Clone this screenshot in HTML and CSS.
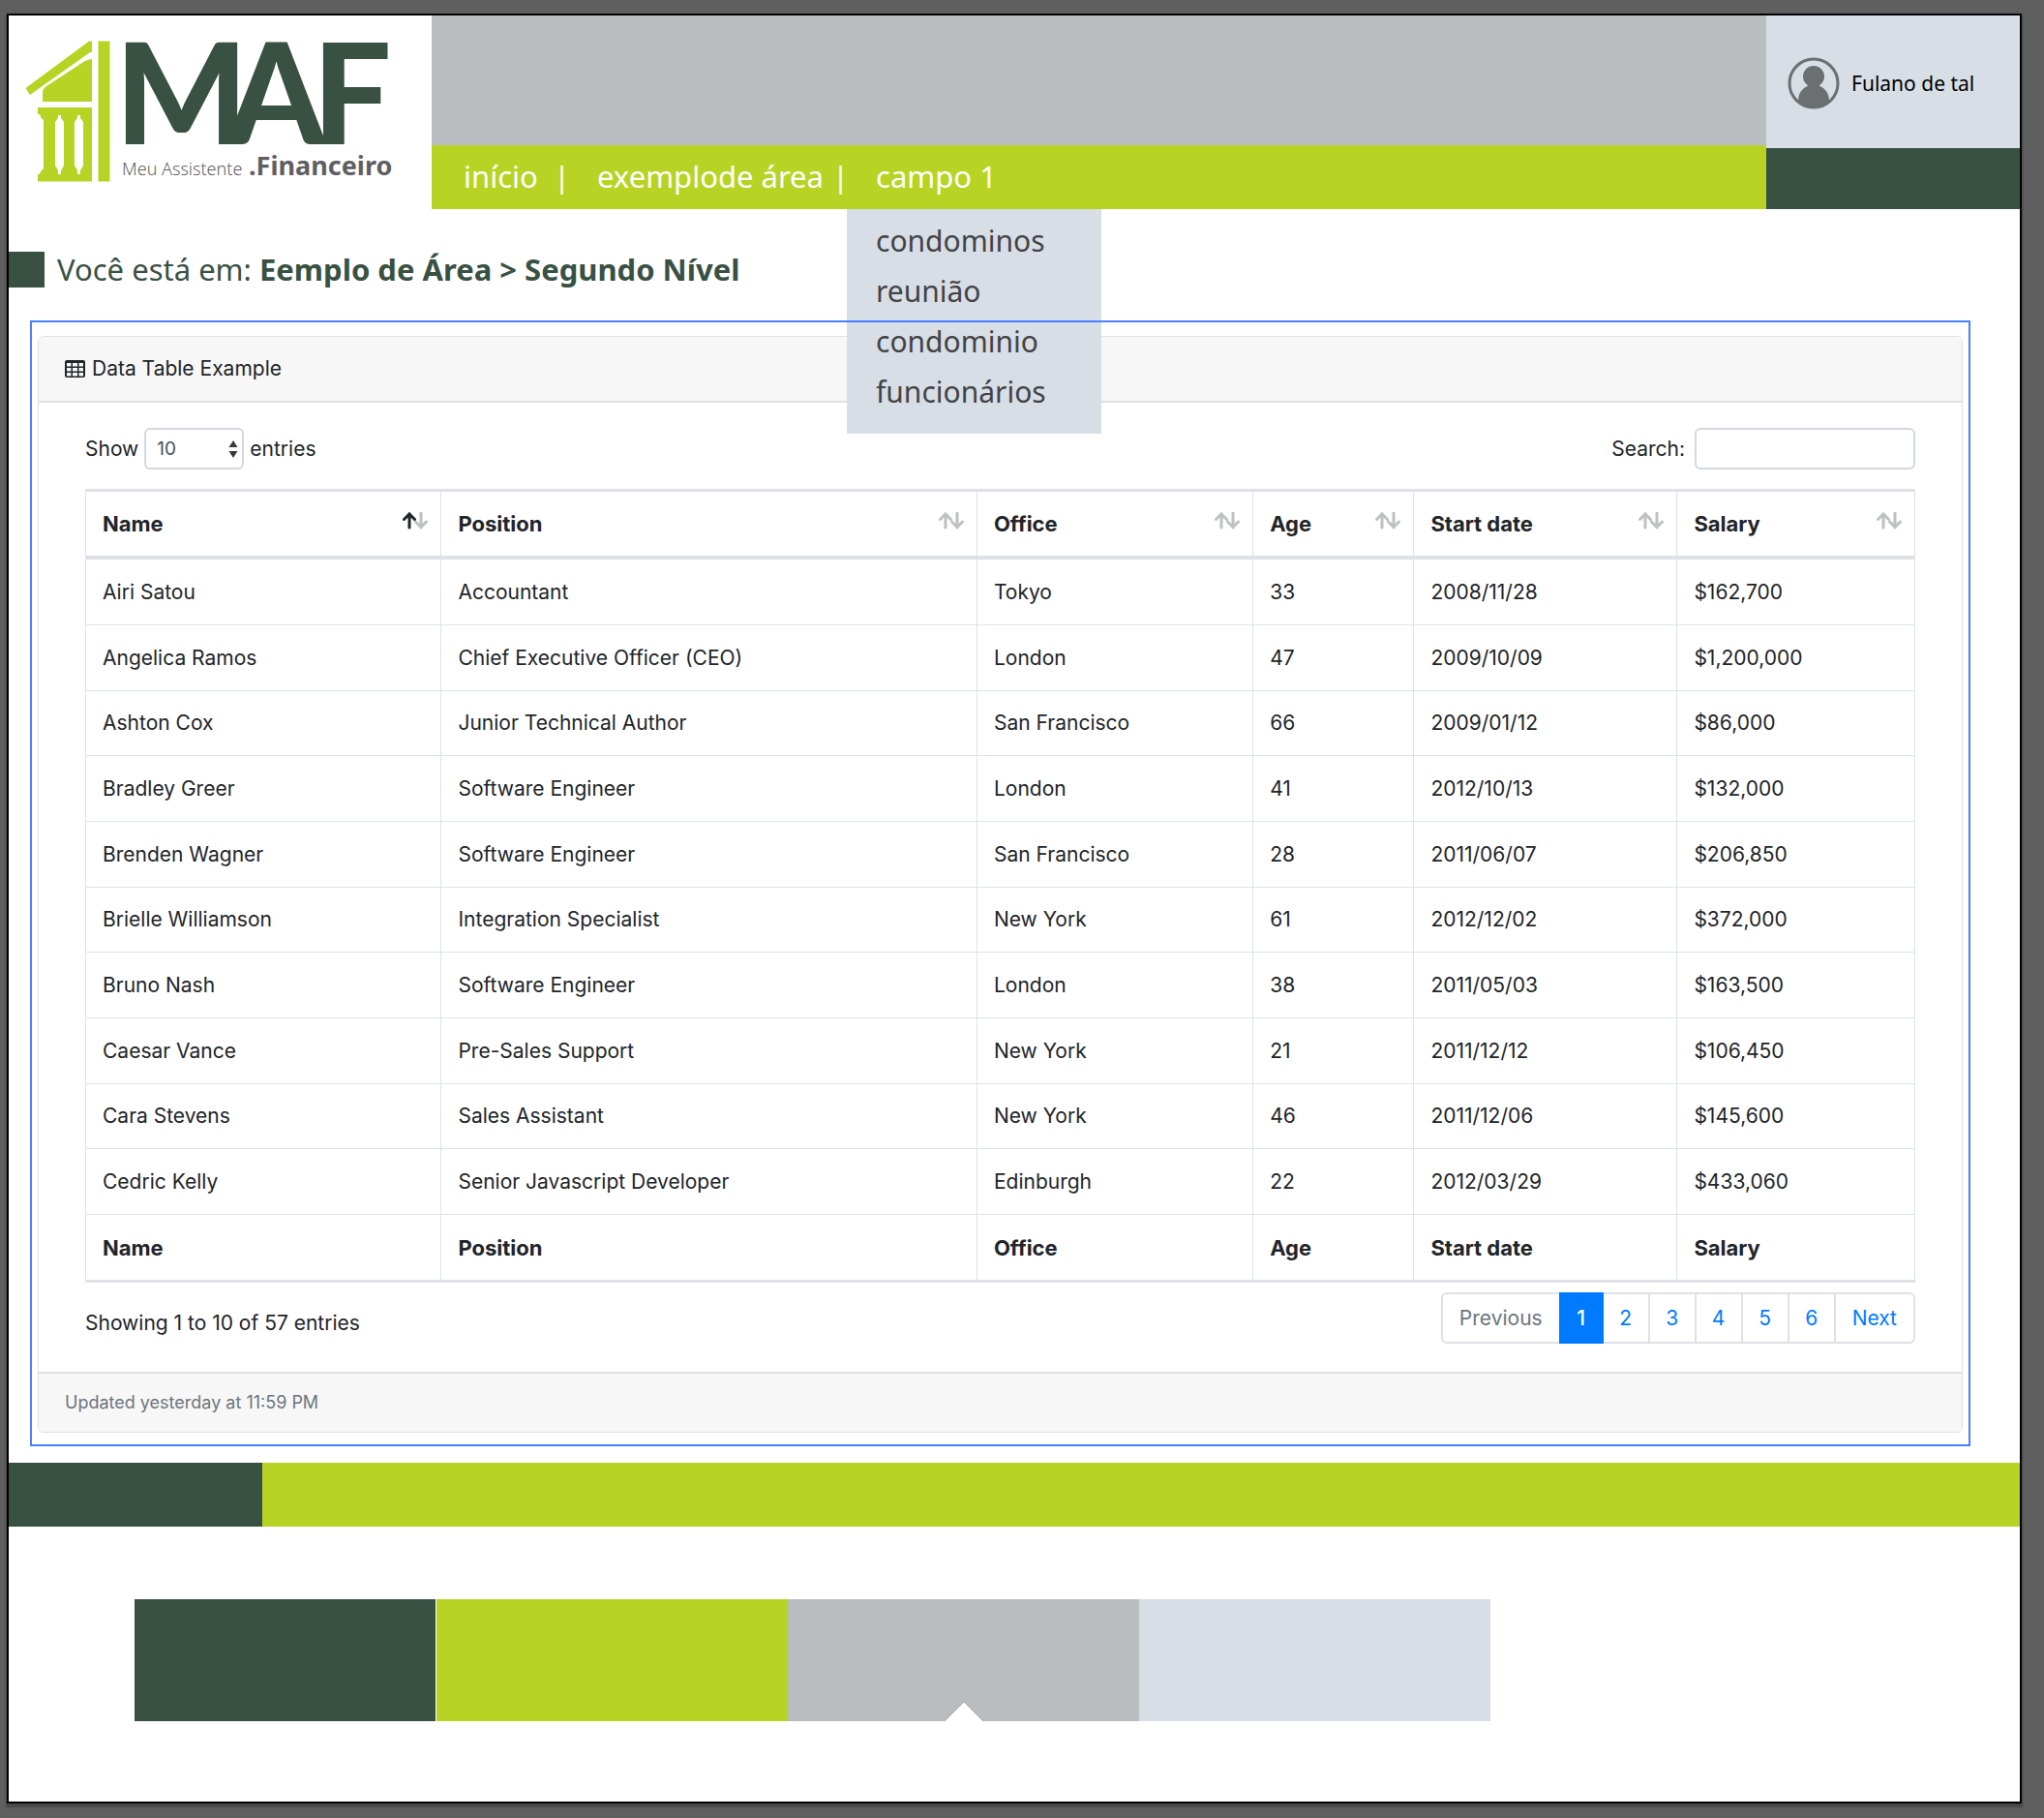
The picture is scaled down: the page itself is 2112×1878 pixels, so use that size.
FILE: index.html
```html
<!DOCTYPE html>
<html lang="pt-BR">
<head>
<meta charset="utf-8">
<meta name="viewport" content="width=device-width, initial-scale=1">
<title>MAF - Meu Assistente Financeiro</title>
<link rel="stylesheet" href="styles.css">
</head>
<body>
<svg class="defs" aria-hidden="true">
  <symbol id="sort" viewBox="0 0 26 25">
    <g class="down"><path d="M19 1V16M13.500 10L19 15.500L24.500 10" fill="none" stroke="currentColor" stroke-width="3" stroke-linecap="round"/></g>
    <g class="up"><path d="M7 16V1.500M1.500 7.500L7 2L12.500 7.500" fill="none" stroke="currentColor" stroke-width="3" stroke-linecap="round"/></g>
  </symbol>
</svg>
<div class="page">
  <header class="header">
    <a class="logo" href="#" aria-label="MAF Meu Assistente Financeiro">
      <svg class="logo-art" viewBox="0 0 437 200" role="img">
        <g fill="#b7d424">
          <path d="M83 26.500H86V37.500Q84 38 82 39.500L22 82L17.500 75Z"/>
          <path d="M86 45V89H35V80Q35 76 39 73L78 47.500Q82 45 86 45Z"/>
          <rect x="92.500" y="26.500" width="12" height="145"/>
          <path fill-rule="evenodd" d="M30 95H86V171.500H30V164H32Q33 160 36 158V108Q33 106 32 102H30ZM51 103H54V106L57 110V155L54 160V164H51V160L48 155V110L51 106ZM71 103H74V106L77 110V155L74 160V164H71V160L68 155V110L71 106Z"/>
        </g>
        <text class="word" x="110 226 314" y="133">MAF</text>
        <text class="sub" x="117" y="165">Meu Assistente</text>
        <text class="sub-strong" x="248" y="165">.Financeiro</text>
      </svg>
    </a>
    <div class="header-main">
      <div class="banner"></div>
      <nav class="nav">
        <ul class="nav-list">
          <li class="nav-item first"><a href="#">início</a><span aria-hidden="true">|</span></li>
          <li class="nav-item second"><a href="#">exemplode área</a><span aria-hidden="true">|</span></li>
          <li class="nav-item"><a href="#">campo 1</a>
            <ul class="menu">
              <li><a href="#">condominos</a></li>
              <li><a href="#">reunião</a></li>
              <li><a href="#">condominio</a></li>
              <li><a href="#">funcionários</a></li>
            </ul>
          </li>
        </ul>
      </nav>
    </div>
    <div class="account">
      <a class="user" href="#">
        <svg class="avatar" viewBox="0 0 54 54" aria-hidden="true">
          <defs><clipPath id="ring"><circle cx="27" cy="27" r="26"/></clipPath></defs>
          <circle cx="27" cy="27" r="25" fill="none" stroke="#6b6f71" stroke-width="3"/>
          <g fill="#6b6f71" clip-path="url(#ring)"><circle cx="27" cy="20" r="11"/><path d="M11 45Q11 34 22 29H32Q43 34 43 45V54H11Z"/></g>
        </svg>
        <span>Fulano de tal</span>
      </a>
      <div class="account-bar"></div>
    </div>
  </header>

  <p class="crumbs"><span class="marker"></span><span>Você está em: <strong>Eemplo de Área &gt; Segundo Nível</strong></span></p>

  <main class="content">
    <section class="card">
      <h1 class="card-header">
        <svg class="table-icon" viewBox="0 0 21 18" aria-hidden="true"><path fill="currentColor" fill-rule="evenodd" d="M2 0H19Q21 0 21 2V16Q21 18 19 18H2Q0 18 0 16V2Q0 0 2 0ZM2 3V6.500H6.500V3ZM8 3V6.500H13V3ZM14.500 3V6.500H19V3ZM2 8V11.500H6.500V8ZM8 8V11.500H13V8ZM14.500 8V11.500H19V8ZM2 13V16.500H6.500V13ZM8 13V16.500H13V13ZM14.500 13V16.500H19V13Z"/></svg>
        Data Table Example
      </h1>
      <div class="card-body">
        <div class="controls">
          <label class="control">Show
            <span class="select-wrap"><select><option>10</option><option>25</option><option>50</option><option>100</option></select>
            <svg class="caret" viewBox="0 0 10 18" aria-hidden="true"><path fill="#343a40" d="M5 0L9.500 7H0.500ZM5 18L0.500 11H9.500Z"/></svg></span>
            entries</label>
          <label class="control search">Search: <input type="search"></label>
        </div>
        <table class="data">
          <colgroup><col class="c-name"><col class="c-position"><col class="c-office"><col class="c-age"><col class="c-date"><col class="c-salary"></colgroup>
          <thead>
            <tr>
              <th aria-sort="ascending"><div class="th">Name<svg class="sort asc"><use href="#sort"/></svg></div></th>
              <th><div class="th">Position<svg class="sort"><use href="#sort"/></svg></div></th>
              <th><div class="th">Office<svg class="sort"><use href="#sort"/></svg></div></th>
              <th><div class="th">Age<svg class="sort"><use href="#sort"/></svg></div></th>
              <th><div class="th">Start date<svg class="sort"><use href="#sort"/></svg></div></th>
              <th><div class="th">Salary<svg class="sort"><use href="#sort"/></svg></div></th>
            </tr>
          </thead>
          <tbody>
            <tr><td>Airi Satou</td><td>Accountant</td><td>Tokyo</td><td>33</td><td>2008/11/28</td><td>$162,700</td></tr>
            <tr><td>Angelica Ramos</td><td>Chief Executive Officer (CEO)</td><td>London</td><td>47</td><td>2009/10/09</td><td>$1,200,000</td></tr>
            <tr><td>Ashton Cox</td><td>Junior Technical Author</td><td>San Francisco</td><td>66</td><td>2009/01/12</td><td>$86,000</td></tr>
            <tr><td>Bradley Greer</td><td>Software Engineer</td><td>London</td><td>41</td><td>2012/10/13</td><td>$132,000</td></tr>
            <tr><td>Brenden Wagner</td><td>Software Engineer</td><td>San Francisco</td><td>28</td><td>2011/06/07</td><td>$206,850</td></tr>
            <tr><td>Brielle Williamson</td><td>Integration Specialist</td><td>New York</td><td>61</td><td>2012/12/02</td><td>$372,000</td></tr>
            <tr><td>Bruno Nash</td><td>Software Engineer</td><td>London</td><td>38</td><td>2011/05/03</td><td>$163,500</td></tr>
            <tr><td>Caesar Vance</td><td>Pre-Sales Support</td><td>New York</td><td>21</td><td>2011/12/12</td><td>$106,450</td></tr>
            <tr><td>Cara Stevens</td><td>Sales Assistant</td><td>New York</td><td>46</td><td>2011/12/06</td><td>$145,600</td></tr>
            <tr><td>Cedric Kelly</td><td>Senior Javascript Developer</td><td>Edinburgh</td><td>22</td><td>2012/03/29</td><td>$433,060</td></tr>
          </tbody>
          <tfoot>
            <tr><th>Name</th><th>Position</th><th>Office</th><th>Age</th><th>Start date</th><th>Salary</th></tr>
          </tfoot>
        </table>
        <div class="table-end">
          <p class="info">Showing 1 to 10 of 57 entries</p>
          <nav class="pages" aria-label="Pages">
            <a class="step disabled" href="#" aria-disabled="true">Previous</a><a class="active" href="#" aria-current="page">1</a><a href="#">2</a><a href="#">3</a><a href="#">4</a><a href="#">5</a><a href="#">6</a><a class="step" href="#">Next</a>
          </nav>
        </div>
      </div>
      <footer class="card-footer">Updated yesterday at 11:59 PM</footer>
    </section>
  </main>

  <footer>
    <div class="footer-bar"><div class="footer-accent"></div></div>
    <div class="palette">
      <div class="swatch dark"></div>
      <div class="swatch lime"></div>
      <div class="swatch gray"><svg class="notch" viewBox="0 0 40 20" aria-hidden="true"><path d="M0 20L20 0L40 20Z" fill="#fff"/><path d="M0 20L20 0L40 20" fill="none" stroke="#aaacae"/></svg></div>
      <div class="swatch pale"></div>
    </div>
  </footer>
</div>
</body>
</html>
```

FILE: styles.css
```css
:root {
  --dark: #395143;
  --lime: #b7d424;
  --gray: #b9bdc0;
  --pale: #d7dee6;
  --line: #dee2e6;
  --brand-font: "Noto Sans", sans-serif;
}

* { box-sizing: border-box; }

body {
  margin: 0;
  padding: 14px 23px 14px 7px;
  background: #5f5f5f;
  color: #212529;
  font: 21px/32px Inter, sans-serif;
}

a { color: inherit; text-decoration: none; }
ul { list-style: none; margin: 0; padding: 0; }
.defs { display: none; }

.page {
  background: #fff;
  border: 2px solid #000;
  box-shadow: 0 3px 2px 1px rgba(0, 0, 0, .25);
}

/* Header */
.header { display: grid; grid-template-columns: 437px 1fr 262px; font-family: var(--brand-font); }
.logo-art { display: block; width: 437px; height: 200px; }
.word { font: 900 144px Lato, sans-serif; fill: var(--dark); }
.sub { font: 300 18px var(--brand-font); fill: #5f5f61; }
.sub-strong { font: 700 27px var(--brand-font); fill: #5f5f61; }

.header-main, .account { display: flex; flex-direction: column; }
.banner { flex: 1; background: var(--gray); }
.nav { height: 66px; padding-left: 33px; background: var(--lime); color: #fff; font-size: 31px; }
.nav-list { display: flex; gap: 28px; height: 100%; }
.nav-item { position: relative; display: flex; align-items: center; justify-content: space-between; padding-bottom: 2px; white-space: nowrap; }
.first { width: 110px; }
.second { width: 260px; }
.menu {
  position: absolute;
  top: 100%;
  left: -30px;
  z-index: 2;
  width: 263px;
  padding: 7px 30px 17px;
  background: var(--pale);
  color: #434345;
  font-size: 30px;
  line-height: 52px;
}

.user { display: flex; flex: 1; align-items: center; gap: 12px; padding: 2px 0 0 22px; background: var(--pale); color: #000; }
.avatar { width: 54px; height: 54px; }
.account-bar { height: 63px; background: var(--dark); }

/* Breadcrumb */
.crumbs {
  display: flex;
  align-items: center;
  gap: 13px;
  height: 37px;
  margin: 44px 0 34px;
  color: var(--dark);
  font: 400 31px/37px var(--brand-font);
}
.crumbs strong { font-weight: 700; }
.marker { width: 37px; height: 37px; background: var(--dark); }

/* Content frame, drawn above the open menu */
.content { position: relative; margin: 0 51px 17px 22px; padding: 16px 8px 14px; }
.content::after { content: ""; position: absolute; inset: 0; z-index: 3; border: 2px solid #4a80ff; pointer-events: none; }

.card { border: 1px solid #dfdfdf; border-radius: 6px; overflow: hidden; }
.card-header {
  display: flex;
  align-items: center;
  gap: 7px;
  margin: 0;
  padding: 17px 27px;
  background: #f7f7f7;
  border-bottom: 2px solid #dfdfdf;
  font-size: 21px;
  font-weight: 400;
}
.table-icon { width: 21px; height: 18px; }
.card-body { padding: 26px 48px 29px; }

.controls { display: flex; justify-content: space-between; margin-bottom: 20px; }
.control { display: flex; align-items: center; gap: 6px; }
.search { gap: 10px; }
.select-wrap { position: relative; display: flex; }
.control select, .control input {
  height: 43px;
  border: 2px solid #d3d9df;
  border-radius: 6px;
  background: #fff;
  font: 19px Inter, sans-serif;
  color: #495057;
}
.control select { appearance: none; width: 103px; padding: 0 11px; }
.control input { width: 228px; padding: 0 10px; }
.caret { position: absolute; right: 6px; top: 13px; width: 10px; height: 18px; }

/* Data table */
.data { width: 100%; table-layout: fixed; border-collapse: separate; border-spacing: 0; border: solid var(--line); border-width: 3px 1px 2px 1px; }
.c-name { width: 19.4%; }
.c-position { width: 29.3%; }
.c-office { width: 15.1%; }
.c-age { width: 8.8%; }
.c-date { width: 14.4%; }
.c-salary { width: 13%; }
.data th, .data td { height: 68px; padding: 0 13px 0 17px; border: solid var(--line); border-width: 0 0 1px 1px; text-align: left; }
.data tbody tr:nth-child(3n) td { height: 67px; }
.data th:first-child, .data td:first-child { border-left: 0; }
.data th { font-size: 22px; font-weight: 700; }
.data thead th { height: 70px; border-bottom-width: 4px; }
.th { display: flex; align-items: center; justify-content: space-between; }
.sort { width: 26px; height: 25px; color: #bfc0c1; --up: currentColor; }
.sort.asc { --up: #212529; }
.up { color: var(--up); }

.table-end { display: flex; justify-content: space-between; align-items: center; padding-top: 10px; }
.info { margin: 0; padding-top: 10px; }
.pages { display: flex; border: 2px solid var(--line); border-radius: 6px; color: #007bff; }
.pages a { width: 48px; padding: 9px 0 8px; border-left: 2px solid var(--line); text-align: center; }
.pages .step { width: auto; padding: 9px 17px 8px; }
.pages a:first-child { border-left: 0; }
.pages .disabled { color: #6c757d; }
.pages .active { width: 46px; margin: -2px 0; padding: 11px 0 10px; background: #007bff; border: 0; color: #fff; font-weight: 500; }
.pages .active + a { width: 46px; border-left: 0; }

.card-footer { padding: 14px 27px; background: #f7f7f7; border-top: 2px solid #dfdfdf; color: #6c757d; font-size: 18px; }

/* Footer */
.footer-bar { height: 66px; background: var(--lime); }
.footer-accent { width: 262px; height: 100%; background: var(--dark); }
.palette { display: grid; grid-template-columns: 312fr 363fr 363fr 363fr; width: 1401px; max-width: 90%; margin: 75px 0 83px 130px; }
.swatch { display: flex; justify-content: center; align-items: flex-end; height: 126px; }
.dark { background: var(--dark); border-right: 1px solid #fff; }
.lime { background: var(--lime); }
.gray { background: var(--gray); }
.pale { background: var(--pale); }
.notch { width: 40px; height: 20px; }
```
